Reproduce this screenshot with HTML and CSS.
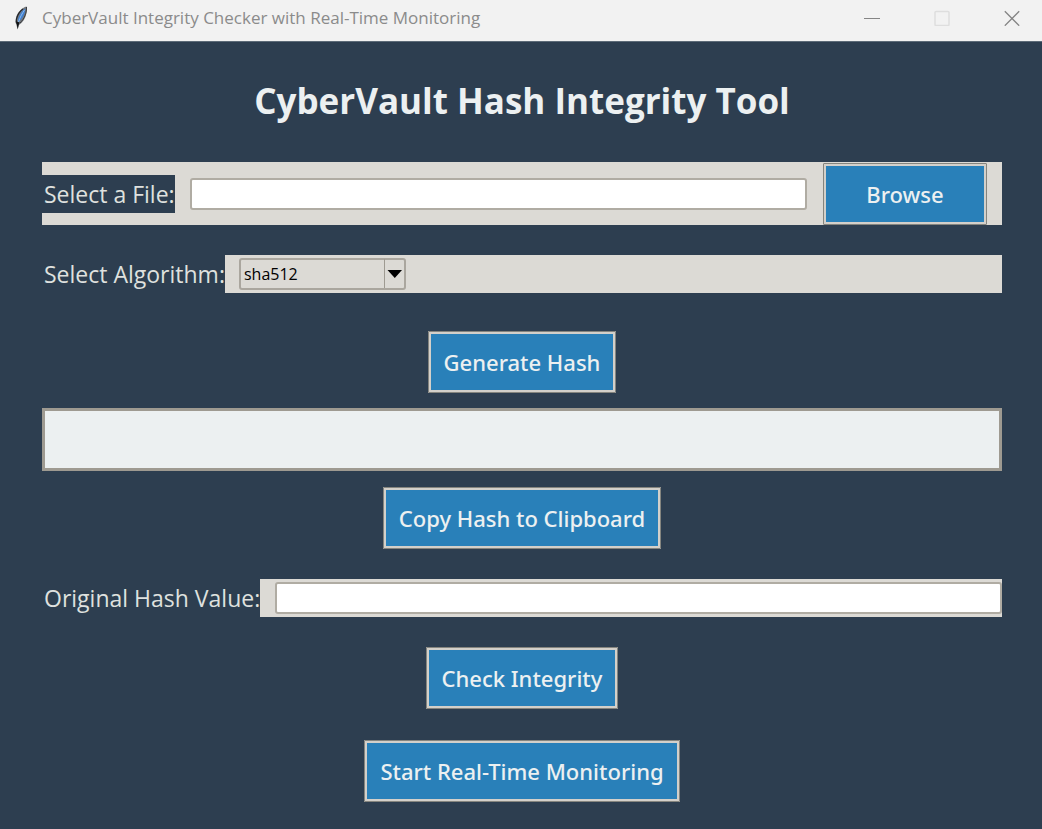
FILE: index.html
```html
<!DOCTYPE html>
<html lang="en">
<head>
<meta charset="utf-8">
<title>CyberVault Integrity Checker with Real-Time Monitoring</title>
<link rel="stylesheet" href="styles.css">
</head>
<body>
<header class="titlebar">
  <svg class="feather" viewBox="0 0 16 26" aria-hidden="true">
    <path d="M13.500 1.500C9 2.500 4.500 7 3 13c-.8 3-.5 5 .3 6.500L4.500 24l1.500-4c4-2.500 6.500-7 7.500-12 .6-3 .8-5 0-6.500z" fill="#77797c"/>
    <path d="M10 4C7 6 4.500 10 3.500 14c-.4 2-.3 3 .3 4.500" fill="none" stroke="#25282c" stroke-width="1.200"/>
    <path d="M12.300 3.500C9.500 5 6 9.500 5 14.500l.3 2.500c3.500-2.500 5.500-6 6.500-9.500.4-1.500.6-3 .5-4z" fill="#3f7fd0"/>
    <path d="M11.500 5C9.500 8 7 12 5.500 17" fill="none" stroke="#8fbcf0" stroke-width="1"/>
    <path d="M13.500 2c.3 5-2 12-6.500 16" fill="none" stroke="#3a3c40" stroke-width="1"/>
    <path d="M3.500 16.500l3 1-1 3-.7 4-.8-4z" fill="#101214"/>
  </svg>
  <span class="caption">CyberVault Integrity Checker with Real-Time Monitoring</span>
  <div class="window-controls">
    <button class="control" type="button" aria-label="Minimize"><svg viewBox="0 0 16 16"><path d="M0 8.500h16" stroke="#858585"/></svg></button>
    <button class="control" type="button" aria-label="Maximize" disabled><svg viewBox="0 0 16 16"><rect x="1" y="1.500" width="14" height="14" rx="1" stroke="#dedede" stroke-width="1.500"/></svg></button>
    <button class="control" type="button" aria-label="Close"><svg viewBox="0 0 16 16"><path d="M.8 1.300l14.400 14.400M15.200 1.300L.8 15.700" stroke="#858585" stroke-width="1.300"/></svg></button>
  </div>
</header>
<main class="tool">
  <h1 class="heading">CyberVault Hash Integrity Tool</h1>
  <div class="row row-file">
    <label class="label" for="file">Select a File:</label>
    <input class="entry" id="file" type="text">
    <button class="button button-browse" type="button">Browse</button>
  </div>
  <div class="row">
    <label class="label" for="algorithm">Select Algorithm:</label>
    <div class="combo">
      <select class="combo-select" id="algorithm">
        <option>sha512</option>
      </select>
      <svg class="combo-arrow" viewBox="0 0 21 29" aria-hidden="true"><path d="M.5 0v29" stroke="#9e9a91"/><path d="M3.500 11h14.500l-7.250 8z" fill="#000"/></svg>
    </div>
  </div>
  <button class="button generate" type="button">Generate Hash</button>
  <textarea class="output" aria-label="Generated hash" readonly></textarea>
  <button class="button" type="button">Copy Hash to Clipboard</button>
  <div class="row row-original">
    <label class="label" for="original">Original Hash Value:</label>
    <input class="entry" id="original" type="text">
  </div>
  <button class="button check" type="button">Check Integrity</button>
  <button class="button monitor" type="button">Start Real-Time Monitoring</button>
</main>
</body>
</html>
```
FILE: styles.css
```css
* {
  box-sizing: border-box;
}

body {
  margin: 0;
  min-height: 100vh;
  background: #2d3e50;
  color: #ecf0f1;
  font-family: "Open Sans", "Noto Sans", sans-serif;
}

.titlebar {
  display: flex;
  align-items: center;
  height: 42px;
  padding: 0 14px 6px 13px;
  background: #f2f2f2;
  border-bottom: 1px solid #5d6b78;
}

.feather {
  width: 16px;
  height: 26px;
}

.caption {
  margin-left: 13px;
  color: #8b8b8b;
  font-size: 17px;
  line-height: 24px;
}

.window-controls {
  display: flex;
  gap: 38px;
  margin-left: auto;
}

.control {
  width: 32px;
  height: 24px;
  padding: 4px 8px;
  border: 0;
  background: none;
}

.control svg {
  display: block;
  width: 16px;
  height: 16px;
  fill: none;
}

.tool {
  display: flex;
  flex-direction: column;
  align-items: center;
  padding: 29px 40px 26px 42px;
}

.heading {
  margin: 0 0 31px;
  font-size: 35px;
  font-weight: 700;
  line-height: 60px;
}

.row {
  display: flex;
  align-items: center;
  align-self: stretch;
  height: 38px;
  margin-bottom: 30px;
  background: #dcdad5;
}

.row-file {
  height: 63px;
  padding-right: 15px;
}

.label {
  padding: 1px 0 0 2px;
  background: #2d3e50;
  color: #dfe1df;
  font-size: 23px;
  line-height: 37px;
  white-space: nowrap;
}

.entry {
  flex: 1;
  min-width: 0;
  height: 32px;
  margin-left: 15px;
  padding: 0 4px;
  border: 2px solid #b0aca3;
  border-radius: 3px;
  background: #fff;
  font: 16px "Open Sans", "Noto Sans", sans-serif;
}

.row-file .entry {
  margin-right: 16px;
}

.button {
  height: 62px;
  padding: 0 13px;
  border: 3px solid #d3d0ca;
  outline: 1px solid #85857f;
  outline-offset: -1px;
  border-radius: 1px;
  background: #2980b9;
  color: #ecf0f1;
  font: 500 22px/30px "Noto Sans", "Open Sans", sans-serif;
  margin-bottom: 30px;
}

.button-browse {
  width: 164px;
  margin: 0;
}

.combo {
  position: relative;
  width: 167px;
  height: 32px;
  margin-left: 14px;
}

.combo-select {
  appearance: none;
  width: 100%;
  height: 100%;
  padding: 0 24px 0 3px;
  border: 2px solid #aaa69e;
  border-radius: 3px;
  background: #dcdad5;
  color: #000;
  font: 16px "Open Sans", "Noto Sans", sans-serif;
}

.combo-arrow {
  position: absolute;
  top: 1px;
  right: 1px;
  width: 21px;
  height: 29px;
  pointer-events: none;
}

.generate {
  margin: 8px 0 15px;
}

.output {
  align-self: stretch;
  height: 63px;
  margin-bottom: 16px;
  padding: 4px;
  border: 3px solid #9e9a91;
  background: #ecf0f1;
  resize: none;
  font: 16px "Open Sans", "Noto Sans", sans-serif;
}

.check {
  margin-bottom: 31px;
}

.monitor {
  margin-bottom: 0;
}
```
